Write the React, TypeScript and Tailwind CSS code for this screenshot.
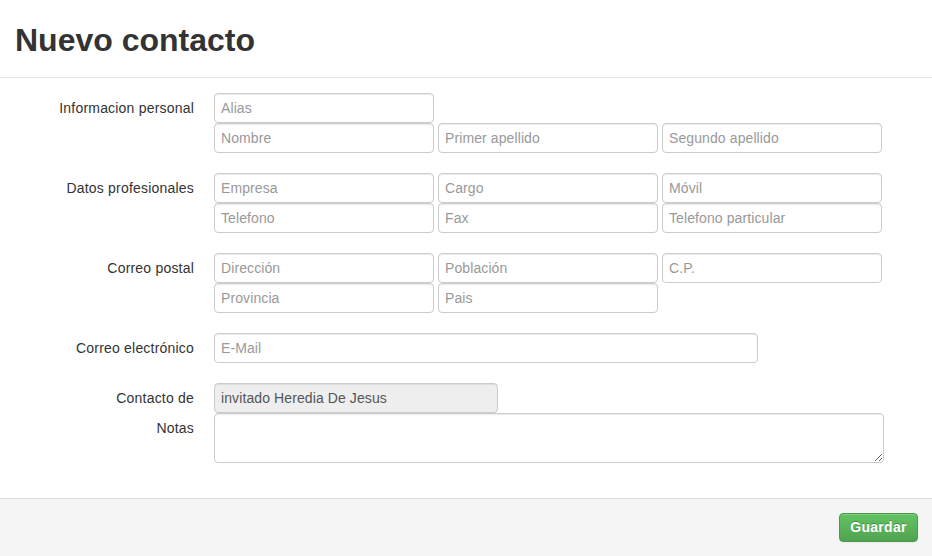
import React from "react";

const font = { fontFamily: '"Liberation Sans", Arial, sans-serif' };

function Field({ placeholder, value, disabled, w = "w-[220px]" }: { placeholder?: string; value?: string; disabled?: boolean; w?: string }) {
  return (
    <input
      readOnly
      placeholder={placeholder}
      defaultValue={value}
      disabled={disabled}
      className={`${w} h-[30px] box-border rounded-[4px] border border-[#cccccc] px-[6px] text-[14px] tracking-[0.1px] text-[#555555] placeholder:text-[#999999] outline-none shadow-[inset_0_1px_1px_rgba(0,0,0,0.075)] ${disabled ? "bg-[#eeeeee]" : "bg-white"}`}
    />
  );
}

function Group({ label, children, last }: { label: string; children: React.ReactNode; last?: boolean }) {
  return (
    <div className={`flex ${last ? "" : "mb-[20px]"}`}>
      <div className="w-[194px] shrink-0 text-right text-[14px] tracking-[0.2px] leading-[30px] text-[#333333]">{label}</div>
      <div className="ml-[20px] flex flex-col">{children}</div>
    </div>
  );
}

function Row({ children }: { children: React.ReactNode }) {
  return <div className="flex gap-[4px]">{children}</div>;
}

export default function App() {
  return (
    <div style={font} className="w-[932px] h-[556px] bg-white flex flex-col overflow-hidden">
      <div className="h-[78px] shrink-0 border-b border-[#e5e5e5] pl-[15px] pt-[20px]">
        <h3 className="text-[32px] font-bold leading-[40px] text-[#333333]">Nuevo contacto</h3>
      </div>

      <div className="pt-[15px] h-[420px] shrink-0">
        <Group label="Informacion personal">
          <Field placeholder="Alias" />
          <Row>
            <Field placeholder="Nombre" />
            <Field placeholder="Primer apellido" />
            <Field placeholder="Segundo apellido" />
          </Row>
        </Group>

        <Group label="Datos profesionales">
          <Row>
            <Field placeholder="Empresa" />
            <Field placeholder="Cargo" />
            <Field placeholder="Móvil" />
          </Row>
          <Row>
            <Field placeholder="Telefono" />
            <Field placeholder="Fax" />
            <Field placeholder="Telefono particular" />
          </Row>
        </Group>

        <Group label="Correo postal">
          <Row>
            <Field placeholder="Dirección" />
            <Field placeholder="Población" />
            <Field placeholder="C.P." />
          </Row>
          <Row>
            <Field placeholder="Provincia" />
            <Field placeholder="Pais" />
          </Row>
        </Group>

        <Group label="Correo electrónico">
          <Field placeholder="E-Mail" w="w-[544px]" />
        </Group>

        <Group label="Contacto de" last>
          <Field value="invitado Heredia De Jesus" disabled w="w-[284px]" />
        </Group>

        <div className="flex">
          <div className="w-[194px] shrink-0 text-right text-[14px] tracking-[0.2px] leading-[30px] text-[#333333]">Notas</div>
          <textarea
            readOnly
            className="ml-[20px] w-[670px] h-[50px] box-border rounded-[4px] border border-[#cccccc] bg-white outline-none shadow-[inset_0_1px_1px_rgba(0,0,0,0.075)]"
          />
        </div>
      </div>

      <div className="flex-1 border-t border-[#dddddd] bg-[#f5f5f5] flex justify-end items-start pt-[14px] pr-[14px]">
        <button className="w-[79px] h-[29px] rounded-[4px] border border-[#4a9a4a] bg-gradient-to-b from-[#62c462] to-[#51a351] text-white text-[14px] font-bold tracking-[0.3px] [text-shadow:0_-1px_0_rgba(0,0,0,0.25)] shadow-[inset_0_1px_0_rgba(255,255,255,0.2),0_1px_2px_rgba(0,0,0,0.05)]">
          Guardar
        </button>
      </div>
    </div>
  );
}
